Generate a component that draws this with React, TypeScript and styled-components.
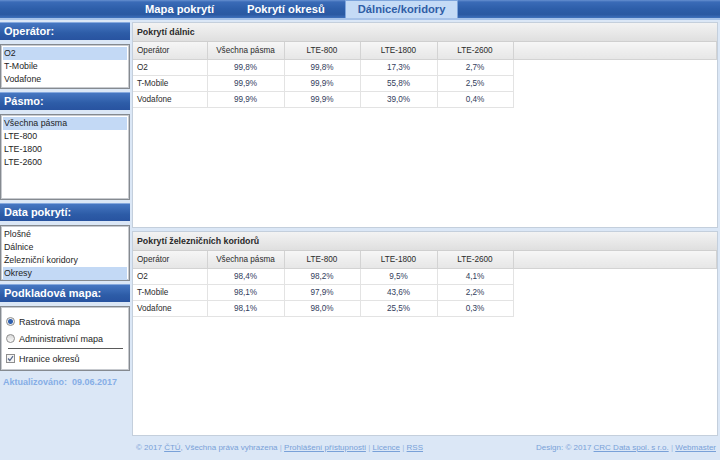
import React from 'react'
import styled, { createGlobalStyle } from 'styled-components'

const GlobalStyle = createGlobalStyle`
  html, body {
    margin: 0;
    padding: 0;
    background: #dbe7f6;
    font-family: "Liberation Sans", Arial, sans-serif;
  }
`

type Row = { name: string; values: string[] }

const bands = ['Všechna pásma', 'LTE-800', 'LTE-1800', 'LTE-2600']

const highways: Row[] = [
  { name: 'O2', values: ['99,8%', '99,8%', '17,3%', '2,7%'] },
  { name: 'T-Mobile', values: ['99,9%', '99,9%', '55,8%', '2,5%'] },
  { name: 'Vodafone', values: ['99,9%', '99,9%', '39,0%', '0,4%'] },
]

const railways: Row[] = [
  { name: 'O2', values: ['98,4%', '98,2%', '9,5%', '4,1%'] },
  { name: 'T-Mobile', values: ['98,1%', '97,9%', '43,6%', '2,2%'] },
  { name: 'Vodafone', values: ['98,1%', '98,0%', '25,5%', '0,3%'] },
]

const App: React.FC = () => {
  return (
    <>
      <GlobalStyle />
      <Page>
        <TopBar>
          <Tab>Mapa pokrytí</Tab>
          <Tab>Pokrytí okresů</Tab>
          <Tab active>Dálnice/koridory</Tab>
        </TopBar>

        <Body>
          <Sidebar>
            <Section>
              <SectionTitle>Operátor:</SectionTitle>
              <ListBox height={45}>
                <ListItem selected>O2</ListItem>
                <ListItem>T-Mobile</ListItem>
                <ListItem>Vodafone</ListItem>
              </ListBox>
            </Section>
            <Section>
              <SectionTitle>Pásmo:</SectionTitle>
              <ListBox height={86}>
                <ListItem selected>Všechna pásma</ListItem>
                <ListItem>LTE-800</ListItem>
                <ListItem>LTE-1800</ListItem>
                <ListItem>LTE-2600</ListItem>
              </ListBox>
            </Section>
            <Section>
              <SectionTitle>Data pokrytí:</SectionTitle>
              <ListBox height={56}>
                <ListItem>Plošné</ListItem>
                <ListItem>Dálnice</ListItem>
                <ListItem>Železniční koridory</ListItem>
                <ListItem selected>Okresy</ListItem>
              </ListBox>
            </Section>
            <Section>
              <SectionTitle>Podkladová mapa:</SectionTitle>
              <OptionBox>
                <Option>
                  <Radio checked />
                  Rastrová mapa
                </Option>
                <Option>
                  <Radio />
                  Administrativní mapa
                </Option>
                <Divider />
                <Option>
                  <CheckBox>
                    <svg width="7" height="7" viewBox="0 0 7 7">
                      <polyline points="1,3.5 2.8,5.5 6,1.2" fill="none" stroke="#56688c" strokeWidth="1.2" />
                    </svg>
                  </CheckBox>
                  Hranice okresů
                </Option>
              </OptionBox>
            </Section>
            <Updated>Aktualizováno:&nbsp; 09.06.2017</Updated>
          </Sidebar>

          <Main>
            <CoverageTable title="Pokrytí dálnic" rows={highways} />
            <CoverageTable title="Pokrytí železničních koridorů" rows={railways} />
          </Main>
        </Body>

        <Footer>
          <span />
          <FooterText>
            © 2017 <FooterLink>ČTÚ</FooterLink>, Všechna práva vyhrazena <Sep>|</Sep>{' '}
            <FooterLink>Prohlášení přístupnosti</FooterLink> <Sep>|</Sep> <FooterLink>Licence</FooterLink>{' '}
            <Sep>|</Sep> <FooterLink>RSS</FooterLink>
          </FooterText>
          <FooterText>
            Design: © 2017 <FooterLink>CRC Data spol. s r.o.</FooterLink> <Sep>|</Sep>{' '}
            <FooterLink>Webmaster</FooterLink>
          </FooterText>
        </Footer>
      </Page>
    </>
  )
}

const CoverageTable: React.FC<{ title: string; rows: Row[] }> = ({ title, rows }) => (
  <Panel>
    <PanelTitle>{title}</PanelTitle>
    <Table>
      <colgroup>
        <col style={{ width: 74 }} />
        <col style={{ width: 77 }} />
        <col style={{ width: 76 }} />
        <col style={{ width: 77 }} />
        <col style={{ width: 76 }} />
        <col />
      </colgroup>
      <thead>
        <tr>
          <Th align="left">Operátor</Th>
          {bands.map((b) => (
            <Th key={b}>{b}</Th>
          ))}
          <Th />
        </tr>
      </thead>
      <tbody>
        {rows.map((r) => (
          <tr key={r.name}>
            <NameCell>{r.name}</NameCell>
            {r.values.map((v, i) => (
              <ValueCell key={i}>{v}</ValueCell>
            ))}
            <EmptyCell />
          </tr>
        ))}
      </tbody>
    </Table>
  </Panel>
)

const Page = styled.div`
  width: 720px;
  height: 460px;
  display: grid;
  grid-template-rows: 20px 1fr 24px;
  overflow: hidden;
`

const TopBar = styled.div`
  display: flex;
  align-items: flex-end;
  gap: 7px;
  padding-left: 132px;
  height: 18px;
  background: linear-gradient(#6690d0 0, #3a6bb7 2px, #2d5ea9 50%, #2a59a2 80%, #3f71bc 100%);
  border-bottom: 2px solid #a6c2e9;
`

const Tab = styled.div<{ active?: boolean }>`
  height: 17px;
  line-height: 17px;
  padding: 0 12px;
  font-size: 11.2px;
  font-weight: bold;
  color: ${(p) => (p.active ? '#2f5ea6' : '#ffffff')};
  background: ${(p) => (p.active ? '#c5dbf6' : 'transparent')};
  border: 1px solid ${(p) => (p.active ? '#7ea5dc' : 'transparent')};
  border-bottom: none;
`

const Body = styled.div`
  display: grid;
  grid-template-columns: 130px 1fr;
  column-gap: 2px;
  padding: 2px 2px 0 0;
  min-height: 0;
`

const Sidebar = styled.div`
  display: flex;
  flex-direction: column;
  gap: 3px;
`

const Section = styled.div`
  display: flex;
  flex-direction: column;
  gap: 4px;
`

const SectionTitle = styled.div`
  height: 17px;
  line-height: 17px;
  padding-left: 4px;
  font-size: 11px;
  font-weight: bold;
  color: #ffffff;
  background: linear-gradient(#4677c2, #2d5ca7 60%, #2853a0);
  border-top: 1px solid #86a9de;
`

const ListBox = styled.div<{ height: number }>`
  height: ${(p) => p.height}px;
  box-sizing: border-box;
  background: #ffffff;
  border: 1px solid #858a90;
  box-shadow: inset 0 0 0 1px #c7cacf;
  padding: 2px 2px;
`

const ListItem = styled.div<{ selected?: boolean }>`
  height: 13px;
  line-height: 13px;
  padding-left: 1px;
  font-size: 8.8px;
  color: #1e1e1e;
  background: ${(p) => (p.selected ? '#c3d9f5' : 'transparent')};
`

const OptionBox = styled.div`
  height: 65px;
  box-sizing: border-box;
  background: #ffffff;
  border: 1px solid #858a90;
  box-shadow: inset 0 0 0 1px #c7cacf;
  padding: 6px 5px 0 5px;
  display: flex;
  flex-direction: column;
`

const Option = styled.div`
  display: flex;
  align-items: center;
  gap: 4px;
  height: 17px;
  font-size: 9px;
  color: #1e1e1e;
`

const Radio = styled.span<{ checked?: boolean }>`
  box-sizing: border-box;
  width: 9px;
  height: 9px;
  border-radius: 50%;
  border: 1px solid #8d8d8d;
  background: ${(p) =>
    p.checked
      ? 'radial-gradient(circle, #2f5fae 0 2px, #9fb8dc 2.6px, #ececec 3px)'
      : 'linear-gradient(#d8d8d8, #fafafa)'};
`

const CheckBox = styled.span`
  box-sizing: border-box;
  width: 9px;
  height: 9px;
  border: 1px solid #8d8d8d;
  background: #f4f4f4;
  display: flex;
  align-items: center;
  justify-content: center;
`

const Divider = styled.div`
  height: 1px;
  margin: 1px 1px 1px 2px;
  background: #5a5a5a;
`

const Updated = styled.div`
  margin-top: 3px;
  padding-left: 3px;
  font-size: 9px;
  font-weight: bold;
  color: #86aee6;
`

const Main = styled.div`
  display: flex;
  flex-direction: column;
  gap: 3px;
  min-height: 0;
`

const Panel = styled.div`
  flex: 1;
  background: #ffffff;
  border: 1px solid #c4cfdc;
`

const PanelTitle = styled.div`
  height: 18px;
  line-height: 18px;
  padding-left: 4px;
  font-size: 8.8px;
  font-weight: bold;
  color: #2a2a2a;
  background: linear-gradient(#f3f3f3, #dfdfdf);
  border-bottom: 1px solid #cfcfcf;
`

const Table = styled.table`
  width: 100%;
  table-layout: fixed;
  border-collapse: collapse;
  font-size: 8.2px;
`

const Th = styled.th<{ align?: string }>`
  height: 17px;
  padding: 0 4px;
  font-weight: normal;
  text-align: ${(p) => p.align || 'center'};
  color: #2b2b2b;
  background: linear-gradient(#f6f6f6, #e6e6e6);
  border-right: 1px solid #d3d3d3;
  border-bottom: 1px solid #d3d3d3;
`

const NameCell = styled.td`
  height: 15px;
  padding: 0 4px;
  color: #2b2b2b;
  border-right: 1px solid #e3e3e3;
  border-bottom: 1px solid #e3e3e3;
`

const ValueCell = styled(NameCell)`
  text-align: center;
  color: #33405c;
`

const EmptyCell = styled.td`
  border: none;
`

const Footer = styled.div`
  display: grid;
  grid-template-columns: 132px 1fr auto;
  align-items: center;
  padding: 0 4px 2px 0;
`

const FooterText = styled.div`
  padding-left: 4px;
  font-size: 8px;
  color: #79a1d8;
  white-space: nowrap;
`

const FooterLink = styled.span`
  text-decoration: underline;
`

const Sep = styled.span`
  color: #9bb9e2;
`

export default App
